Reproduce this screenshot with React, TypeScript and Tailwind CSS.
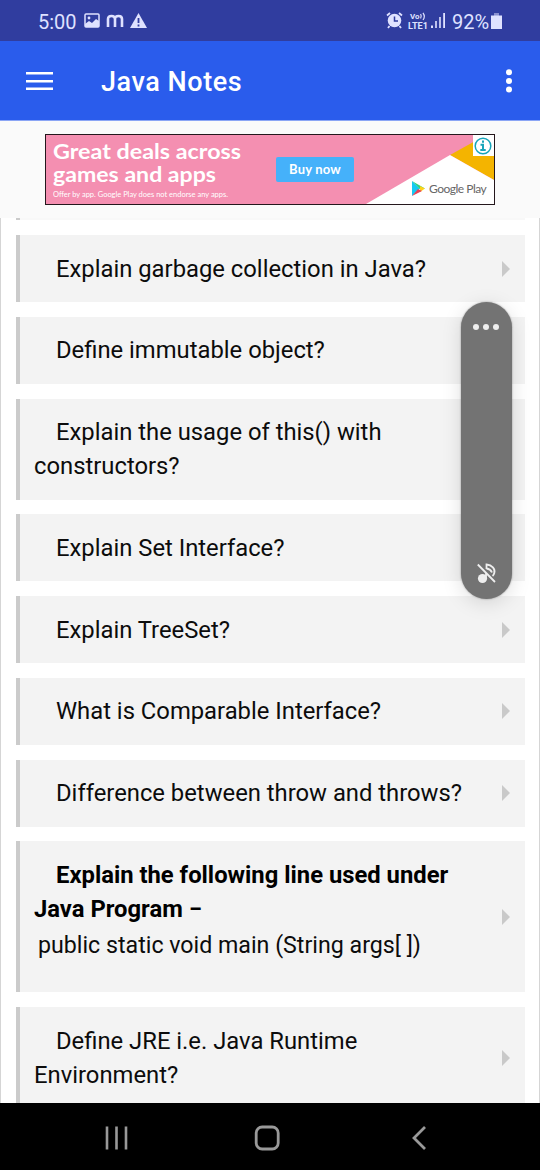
import type { ReactNode } from "react";

function Row({ className, children }: { className: string; children: ReactNode }) {
  return (
    <li className={`flex shrink-0 items-center justify-between border-l-4 border-[#cbcbcb] bg-[#f3f3f3] pr-[14.5px] pl-[14px] ${className}`}>
      <div className="self-start pt-[16.5px] indent-[22px] text-[23.8px] leading-[34px] whitespace-nowrap text-[#0c0c0c]">{children}</div>
      <svg className="h-4 w-2 shrink-0" viewBox="0 0 8 16" fill="#c9c9c9"><path d="M0 0 8 8 0 16Z" /></svg>
    </li>
  );
}

function StatusBar() {
  return (
    <header className="flex h-[41px] shrink-0 items-center bg-[#303d9f] pl-[38px] text-[20px] text-[#dfe2ff]">
      <span className="w-[46px] pt-[2px] text-[20px]">5:00</span>
      <svg className="h-[15px] w-[16px]" viewBox="0 0 16 15">
        <rect x="1" y="1" width="14" height="13" rx="1" fill="none" stroke="currentColor" strokeWidth="1.5" />
        <path d="M1 11 5 8 8 10 12 6 15 8V14H1Z" fill="currentColor" />
        <circle cx="5" cy="5" r="1.4" fill="currentColor" />
      </svg>
      <svg className="ml-[6px] h-[14px] w-[18px]" viewBox="0 0 18 14" fill="none" stroke="currentColor" strokeWidth="2.6">
        <path d="M2 13V5Q2 2 5.5 2T9 5V13M9 5Q9 2 12.5 2T16 5V13" />
      </svg>
      <svg className="ml-[6px] h-[15px] w-[17px]" viewBox="0 0 17 15">
        <path d="M8.5 0 17 15H0Z" fill="currentColor" />
        <path d="M8.5 5V10M8.5 11.5V13.5" stroke="#303d9f" strokeWidth="1.8" />
      </svg>
      <svg className="ml-[239px] h-[17px] w-[17px]" viewBox="0 0 17 17">
        <circle cx="8.5" cy="8.5" r="6.8" fill="currentColor" />
        <path d="M1 3.5 4 1M16 3.5 13 1M3.5 14 2 16M13.5 14 15 16" stroke="currentColor" strokeWidth="1.8" />
        <path d="M8.5 4.5V9H12" fill="none" stroke="#303d9f" strokeWidth="1.5" />
      </svg>
      <svg className="ml-[5px] h-[18px] w-[20px]" viewBox="0 0 20 18" fill="currentColor" fontFamily="Roboto, sans-serif" fontWeight="700">
        <text x="2" y="7" fontSize="7.5" textLength="9.5" lengthAdjust="spacingAndGlyphs">Vo</text>
        <path d="M12.6 2Q14 4.5 12.6 6.5M15 .8Q17.6 4.5 15 8" fill="none" stroke="currentColor" strokeWidth="1.2" />
        <text x="0" y="16.5" fontSize="8.5" textLength="20" lengthAdjust="spacingAndGlyphs">LTE1</text>
      </svg>
      <svg className="ml-[3px] h-[15px] w-[15px]" viewBox="0 0 15 15" fill="currentColor">
        <path d="M0 12.5h2V15H0ZM4.2 8h1.6v7H4.2ZM8.2 4h1.6v11H8.2ZM12.2 0H14v15h-1.8Z" />
      </svg>
      <span className="ml-[6px] w-[39px] pt-[2px] text-[20px]">92%</span>
      <svg className="h-[16px] w-[11px]" viewBox="0 0 11 16" fill="currentColor"><path opacity=".5" d="M3 0h5v3H3Z" /><path d="M0 2.5h11V16H0Z" /></svg>
    </header>
  );
}

function Banner() {
  return (
    <section className="h-[98px] shrink-0 border-t border-[#8ba5f5] bg-[#fafafa] pt-[13px] pl-[45px]">
      <div className="relative flex h-[71px] w-[450px] overflow-hidden border border-[#24171c] bg-[#f48fb1] font-['Lato',sans-serif] text-white">
        <svg className="absolute inset-0 h-[69px] w-[448px]" viewBox="0 0 448 69">
          <path d="M404 20 440 0H448V45L404 20Z" fill="#f4b400" />
          <path d="M404 20 448 45V69H320Z" fill="#fff" />
          <path d="M366 46V61L374 53.5Z" fill="#15c9f2" /><path d="M366 46 379 53.5 374 54Z" fill="#31d17c" /><path d="M374 51 379 53.5 374 57Z" fill="#ffd21a" /><path d="M366 61 372 54 376 56Z" fill="#e84256" />
          <path d="M427 0h21v21H427Z" fill="#fff" />
          <circle cx="437" cy="11" r="7.8" fill="none" stroke="#18a5ba" strokeWidth="1.5" />
          <path d="M437 5.5V7.8M434.5 9.7H437V15M434.3 15H439.7" fill="none" stroke="#18a5ba" strokeWidth="2" />
        </svg>
        <div className="w-[230px] shrink-0 pt-[4px] pl-[7px] whitespace-nowrap">
          <svg className="block h-[49px] w-[200px] text-[21.5px] font-bold" fill="currentColor">
            <text x="0" y="19.5" textLength="188" lengthAdjust="spacingAndGlyphs">Great deals across</text>
            <text x="0" y="43" textLength="163" lengthAdjust="spacingAndGlyphs">games and apps</text>
          </svg>
          <svg className="block h-[10px] w-[180px] text-[7.5px]" fill="currentColor"><text x="0" y="9" textLength="175" lengthAdjust="spacingAndGlyphs">Offer by app. Google Play does not endorse any apps.</text></svg>
        </div>
        <div className="mt-[22px] flex h-[25px] w-[78px] items-center justify-center rounded-[2px] bg-[#45b1fa] text-[13px] font-bold tracking-[0.2px]">Buy now</div>
        <div className="absolute top-[46px] left-[383px] text-[12px] leading-[16px] tracking-[-0.5px] text-[#666]">Google Play</div>
      </div>
    </section>
  );
}

export default function App() {
  return (
    <div className="relative flex h-[1170px] w-[540px] flex-col overflow-hidden bg-white font-['Roboto',sans-serif]">
      <StatusBar />
      <div className="flex h-[79px] shrink-0 items-center bg-[#2a5cec] pl-[26px] text-white">
        <svg className="h-[18px] w-[27px]" viewBox="0 0 27 18"><path d="M0 1.3H27M0 9.2H27M0 16.8H27" stroke="currentColor" strokeWidth="2.5" /></svg>
        <h1 className="ml-[48px] w-[141px] pt-[4px] text-[27px] font-medium tracking-[0.55px] whitespace-nowrap">Java Notes</h1>
        <svg className="ml-[264px] h-[24px] w-[6px]" viewBox="0 0 6 24" fill="currentColor"><circle cx="3" cy="3.3" r="3" /><circle cx="3" cy="12" r="3" /><circle cx="3" cy="20.5" r="3" /></svg>
      </div>
      <Banner />
      <main className="h-[884.5px] shrink-0 overflow-hidden border-x border-[#d5d5d5] pr-[14.5px] pl-[15px]">
        <div className="h-[2px] border-l-4 border-[#cbcbcb] bg-[#f8f8f8]" />
        <ul className="mt-[15px] flex flex-col gap-[14.75px]">
          <Row className="h-[67px]">Explain garbage collection in Java?</Row>
          <Row className="h-[67px]">Define immutable object?</Row>
          <Row className="h-[101px]">Explain the usage of this() with<br />constructors?</Row>
          <Row className="h-[67px]">Explain Set Interface?</Row>
          <Row className="h-[67px]">Explain TreeSet?</Row>
          <Row className="h-[67px]">What is Comparable Interface?</Row>
          <Row className="h-[67px]">Difference between throw and throws?</Row>
          <Row className="h-[151px]">
            <b className="text-black">Explain the following line used under<br />Java Program −</b>
            <p className="pt-px indent-[4px] text-[23.2px] leading-[36px]">public static void main (String args[ ])</p>
          </Row>
          <Row className="h-[101px]">Define JRE i.e. Java Runtime<br />Environment?</Row>
        </ul>
      </main>
      <nav className="flex h-[67.5px] shrink-0 items-center bg-black pt-[3px] text-[#999]">
        <svg className="ml-[104px] h-[26px] w-[26px]" viewBox="0 0 26 26" fill="none" stroke="currentColor" strokeWidth="2.6"><path d="M3 1.5V24.5M12.5 1.5V24.5M22 1.5V24.5" /></svg>
        <svg className="ml-[124px] h-[26px] w-[26px]" viewBox="0 0 26 26" fill="none" stroke="currentColor" strokeWidth="2.8"><rect x="2.2" y="2" width="22" height="22" rx="6" /></svg>
        <svg className="ml-[131px] h-[26px] w-[16px]" viewBox="0 0 16 26" fill="none" stroke="currentColor" strokeWidth="2.8"><path d="M14 2 3 13 14 24" /></svg>
      </nav>
      <aside className="absolute top-[302px] left-[461px] flex h-[297px] w-[51px] flex-col items-center justify-between rounded-full bg-[#737373] pt-[22px] pb-[15px] text-[#eee] shadow-[0_0_2px_rgba(0,0,0,0.4),0_4px_20px_rgba(0,0,0,0.13)]">
        <svg className="mr-[2px] h-[6px] w-[26px]" viewBox="0 0 26 6" fill="currentColor"><circle cx="3" cy="3" r="3" /><circle cx="13" cy="3" r="3" /><circle cx="23" cy="3" r="3" /></svg>
        <svg className="h-[21px] w-[20px]" viewBox="0 0 20 21" fill="none" stroke="currentColor" strokeWidth="1.8">
          <circle cx="5.5" cy="15.5" r="4.6" fill="currentColor" stroke="none" />
          <path d="M9 15V9.5M9.5 6V1.5C15 2 18.5 6 17.3 10Q16.8 12 15.5 13M9.5 5.5Q13.5 6 15 9.5M.8 1.5 18 19" />
        </svg>
      </aside>
    </div>
  );
}
